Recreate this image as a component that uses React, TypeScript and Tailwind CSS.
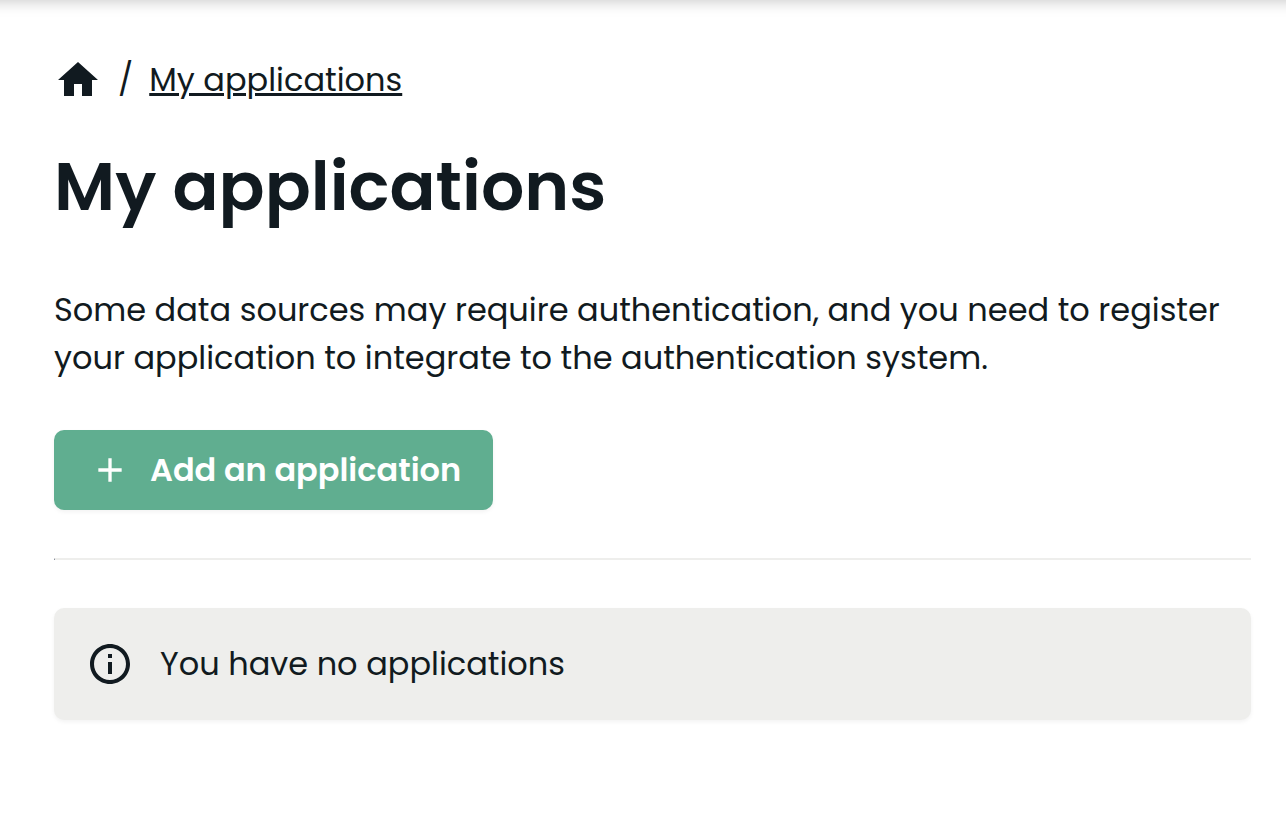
import { MdHome, MdAdd, MdInfoOutline } from "react-icons/md";

export default function App() {
  return (
    <div className="min-h-screen overflow-hidden bg-white font-['Poppins','Inter',sans-serif] text-[#111a20]">
      <header className="-mx-8 -mt-4 h-4 shadow-[0_0_16px_rgba(0,0,0,0.26)]" />
      <main className="pt-14 pr-[35px] pb-24 pl-[54px]">
        <nav aria-label="Breadcrumb">
          <ol className="flex h-12 items-center text-[32px] leading-[48px]">
            <li>
              <a href="#home" aria-label="Home" className="block">
                <MdHome className="size-12" />
              </a>
            </li>
            <li aria-hidden="true" className="px-4">
              /
            </li>
            <li>
              <a href="#applications" aria-current="page" className="underline decoration-3 underline-offset-2">
                My applications
              </a>
            </li>
          </ol>
        </nav>
        <h1 className="mt-8 text-[68px] leading-[102px] font-semibold">My applications</h1>
        <p className="mt-12 text-[32px] leading-[48px]">
          Some data sources may require authentication, and you need to register your application to integrate to the
          authentication system.
        </p>
        <button
          type="button"
          className="mt-12 flex h-20 items-center gap-5 rounded-[10px] bg-[#60ae90] pr-8 pl-9 text-[32px] font-semibold text-white shadow-[0_2px_4px_rgba(0,0,0,0.05)]"
        >
          <MdAdd className="size-10" />
          Add an application
        </button>
        <hr className="mt-12 border-t-2 border-l border-t-[#eeeeec] border-l-gray-500" />
        <div
          role="status"
          className="mt-12 flex h-28 items-center gap-[26px] rounded-[10px] bg-[#eeeeec] px-8 text-[32px] shadow-[0_2px_4px_rgba(0,0,0,0.05)]"
        >
          <MdInfoOutline className="size-12" />
          <p>You have no applications</p>
        </div>
      </main>
    </div>
  );
}
